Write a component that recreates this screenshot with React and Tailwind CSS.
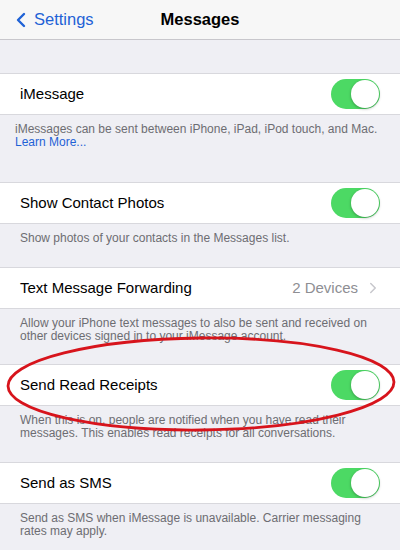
import { ChevronLeft, ChevronRight } from "lucide-react";

function Toggle() {
  return (
    <div className="w-[49px] h-[30px] rounded-full bg-[#4cd964] flex items-center justify-end pr-[1px]">
      <div className="w-[28px] h-[28px] rounded-full bg-white shadow-[0_1px_3px_rgba(0,0,0,0.3)]" />
    </div>
  );
}

function Row({ label, children }) {
  return (
    <div className="h-[42px] bg-white border-y border-[#d8d8dd] flex items-center justify-between pl-5 pr-5">
      <span className="text-[15px] text-black">{label}</span>
      {children}
    </div>
  );
}

function Footer({ children, className }) {
  return (
    <div className={`text-[12px] leading-[13px] text-[#6d6d72] pt-[8px] whitespace-nowrap ${className}`}>
      {children}
    </div>
  );
}

export default function App() {
  return (
    <div
      className="relative w-[400px] h-[550px] overflow-hidden bg-[#efeff4]"
      style={{ fontFamily: "'Liberation Sans', Arial, sans-serif" }}
    >
      {/* nav bar */}
      <div className="h-[40px] bg-[#f7f7f7] border-b border-[#c8c7cc] flex items-center relative">
        <div className="flex items-center pl-[9px] text-[#1f62d6]">
          <ChevronLeft size={24} strokeWidth={2.4} />
          <span className="text-[16.5px] ml-[1px]">Settings</span>
        </div>
        <div className="absolute inset-x-0 text-center text-[16.5px] font-bold text-black pointer-events-none">
          Messages
        </div>
      </div>

      <div className="h-[33px]" />

      <Row label="iMessage">
        <Toggle />
      </Row>
      <Footer className="h-[67px] pl-[15px]">
        iMessages can be sent between iPhone, iPad, iPod touch, and Mac.
        <br />
        <span className="text-[#1f62d6]">Learn More...</span>
      </Footer>

      <Row label="Show Contact Photos">
        <Toggle />
      </Row>
      <Footer className="h-[43px] pl-5">
        Show photos of your contacts in the Messages list.
      </Footer>

      <Row label="Text Message Forwarding">
        <div className="flex items-center text-[#8e8e93] text-[15px]">
          <span>2 Devices</span>
          <ChevronRight size={18} strokeWidth={2} className="text-[#c7c7cc] ml-[6px] -mr-[2px]" />
        </div>
      </Row>
      <Footer className="h-[55px] pl-5">
        Allow your iPhone text messages to also be sent and received on
        <br />
        other devices signed in to your iMessage account.
      </Footer>

      <Row label="Send Read Receipts">
        <Toggle />
      </Row>
      <Footer className="h-[56px] pl-5">
        When this is on, people are notified when you have read their
        <br />
        messages. This enables read receipts for all conversations.
      </Footer>

      <Row label="Send as SMS">
        <Toggle />
      </Row>
      <Footer className="h-[56px] pl-5">
        Send as SMS when iMessage is unavailable. Carrier messaging
        <br />
        rates may apply.
      </Footer>

      {/* hand-drawn red circle around Send Read Receipts */}
      <svg
        className="absolute left-0 top-0 pointer-events-none"
        width="400"
        height="550"
        viewBox="0 0 400 550"
      >
        <ellipse
          cx="201"
          cy="384"
          rx="193"
          ry="46"
          fill="none"
          stroke="#d7141c"
          strokeWidth="2.8"
          transform="rotate(-0.6 201 384)"
        />
      </svg>
    </div>
  );
}
